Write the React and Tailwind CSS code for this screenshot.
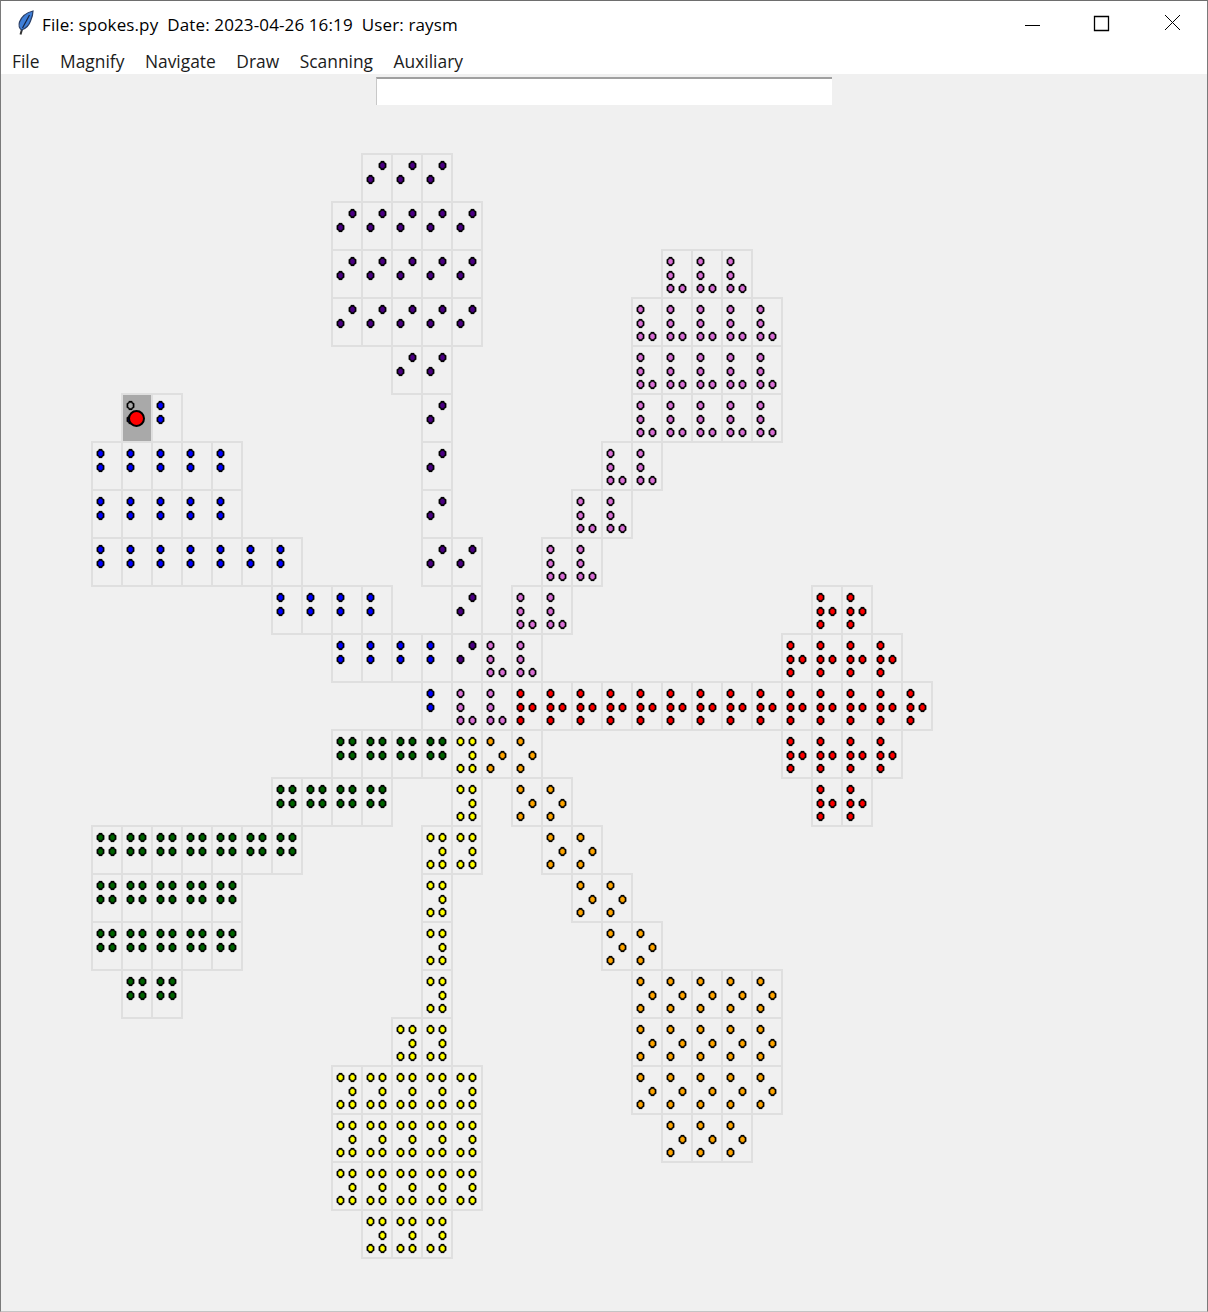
import React from 'react';

const COLORS = {
  purple: '#4b0082',
  blue: '#0000ff',
  pink: '#da70d6',
  red: '#ff0000',
  green: '#006400',
  yellow: '#ffff00',
  orange: '#ffa500',
};

// dots inside a cell, as [column, row]
const PATTERNS = {
  purple: [[1, 0], [0, 1]],
  blue: [[0, 0], [0, 1]],
  pink: [[0, 0], [0, 1], [0, 2], [1, 2]],
  red: [[0, 0], [0, 1], [1, 1], [0, 2]],
  green: [[0, 0], [1, 0], [0, 1], [1, 1]],
  yellow: [[0, 0], [1, 0], [1, 1], [0, 2], [1, 2]],
  orange: [[0, 0], [1, 1], [0, 2]],
};

// one entry per grid row: [color, first column, how many cells]
const ROWS = [
  [['purple', 9, 3]],
  [['purple', 8, 5]],
  [['purple', 8, 5], ['pink', 19, 3]],
  [['purple', 8, 5], ['pink', 18, 5]],
  [['purple', 10, 2], ['pink', 18, 5]],
  [['blue', 1, 2], ['purple', 11, 1], ['pink', 18, 5]],
  [['blue', 0, 5], ['purple', 11, 1], ['pink', 17, 2]],
  [['blue', 0, 5], ['purple', 11, 1], ['pink', 16, 2]],
  [['blue', 0, 7], ['purple', 11, 2], ['pink', 15, 2]],
  [['blue', 6, 4], ['purple', 12, 1], ['pink', 14, 2], ['red', 24, 2]],
  [['blue', 8, 4], ['purple', 12, 1], ['pink', 13, 2], ['red', 23, 4]],
  [['blue', 11, 1], ['pink', 12, 2], ['red', 14, 14]],
  [['green', 8, 4], ['yellow', 12, 1], ['orange', 13, 2], ['red', 23, 4]],
  [['green', 6, 4], ['yellow', 12, 1], ['orange', 14, 2], ['red', 24, 2]],
  [['green', 0, 7], ['yellow', 11, 2], ['orange', 15, 2]],
  [['green', 0, 5], ['yellow', 11, 1], ['orange', 16, 2]],
  [['green', 0, 5], ['yellow', 11, 1], ['orange', 17, 2]],
  [['green', 1, 2], ['yellow', 11, 1], ['orange', 18, 5]],
  [['yellow', 10, 2], ['orange', 18, 5]],
  [['yellow', 8, 5], ['orange', 18, 5]],
  [['yellow', 8, 5], ['orange', 19, 3]],
  [['yellow', 8, 5]],
  [['yellow', 9, 3]],
];

const cells = ROWS.flatMap((spans, row) =>
  spans.flatMap(([color, start, count]) =>
    Array.from({ length: count }, (_, i) => ({ color, row, col: start + i }))
  )
);

const Dot = ({ fill, col, row }) => (
  <svg
    width="11"
    height="11"
    viewBox="0 0 11 11"
    className="block"
    style={{ gridColumnStart: col + 1, gridRowStart: row + 1 }}
  >
    <path
      d="M3.800 1h3.400v1.100l2.100 1.400v4l-2.100 1.400V10H3.800V8.900L1.700 7.500v-4l2.100-1.400z"
      fill="#000"
      stroke="#000"
      strokeOpacity="0.22"
      strokeWidth="1"
    />
    <path d="M4.300 2.700h2.400v1h1v3.600h-1v1H4.300v-1h-1V3.700h1z" fill={fill} />
  </svg>
);

const Cell = ({ color, row, col, selected }) => (
  <div
    className={`w-[32px] h-[50px] -ml-px -mt-px border-2 border-[#dfdfdf] pl-[2px] pt-[5px] ${selected ? 'bg-[#a9a9a9]' : ''}`}
    style={{ gridColumnStart: col + 1, gridRowStart: row + 1 }}
  >
    <div className="grid grid-cols-[12px_11px] grid-rows-[13.5px_13.5px_13.5px]">
      {PATTERNS[color].map(([c, r], i) => (
        <Dot key={i} col={c} row={r} fill={selected && i === 0 ? '#a9a9a9' : COLORS[color]} />
      ))}
    </div>
  </div>
);

const Feather = () => (
  <svg width="18" height="26" viewBox="0 0 18 26" className="block">
    <path d="M3.500 24.500 6 16" stroke="#333" strokeWidth="2" fill="none" />
    <path d="M16 1C10 2.500 4.500 6.500 2.500 12 1.700 15 2.500 18.500 4.500 20 9 18.500 12 15.500 13.500 11 15 7.500 16 4 16 1z" fill="#3f7fd8" stroke="#2a3f66" strokeWidth="1.200" />
    <path d="M12.500 5 5.500 18" stroke="#16233f" strokeWidth="1.200" fill="none" />
  </svg>
);

const App = () => (
  <div className="relative w-[1208px] h-[1312px] bg-[#f0f0f0] border border-[#7a7a7a] border-b-[#c4c4c4] border-t-[#6e6e6e] font-['Open_Sans','Noto_Sans',sans-serif] overflow-hidden">
    <header className="h-[43px] bg-white flex items-center pl-[16px]">
      <Feather />
      <span className="ml-[7px] mt-[3px] text-[17px] leading-none text-black whitespace-pre tracking-[0.12px]">
        File: spokes.py  Date: 2023-04-26 16:19  User: raysm
      </span>
      <div className="ml-auto flex items-center h-full mr-[1px]">
        <svg width="70" height="20" viewBox="0 0 70 20" className="block">
          <path d="M25 12.500h15" stroke="#000" strokeWidth="1" />
        </svg>
        <svg width="70" height="20" viewBox="0 0 70 20" className="block">
          <path d="M24.500 3.500h14v14h-14z" fill="none" stroke="#000" strokeWidth="1.300" />
        </svg>
        <svg width="66" height="20" viewBox="0 0 66 20" className="block">
          <path d="M25 2l15 15M40 2 25 17" stroke="#000" strokeWidth="1" fill="none" />
        </svg>
      </div>
    </header>
    <nav className="h-[30px] bg-white flex items-center gap-[20.500px] pl-[11px] pt-[5px] text-[17.400px] leading-none text-[#1c1c1c]">
      <span>File</span>
      <span>Magnify</span>
      <span>Navigate</span>
      <span>Draw</span>
      <span>Scanning</span>
      <span>Auxiliary</span>
    </nav>
    <div className="ml-[375px] mt-[3px] w-[456px] h-[28px] bg-white border-t-2 border-l border-t-[#a0a0a0] border-l-[#c8c8c8]" />
    <main className="grid grid-cols-[repeat(28,30px)] grid-rows-[repeat(23,48px)] ml-[91px] mt-[49px]">
      {cells.map((cell) => (
        <Cell key={`${cell.row}-${cell.col}`} {...cell} selected={cell.row === 5 && cell.col === 1} />
      ))}
    </main>
    <div className="absolute left-[127px] top-[409px] w-[17px] h-[17px] rounded-full bg-[#ff0000] border-2 border-black" />
  </div>
);

export default App;
